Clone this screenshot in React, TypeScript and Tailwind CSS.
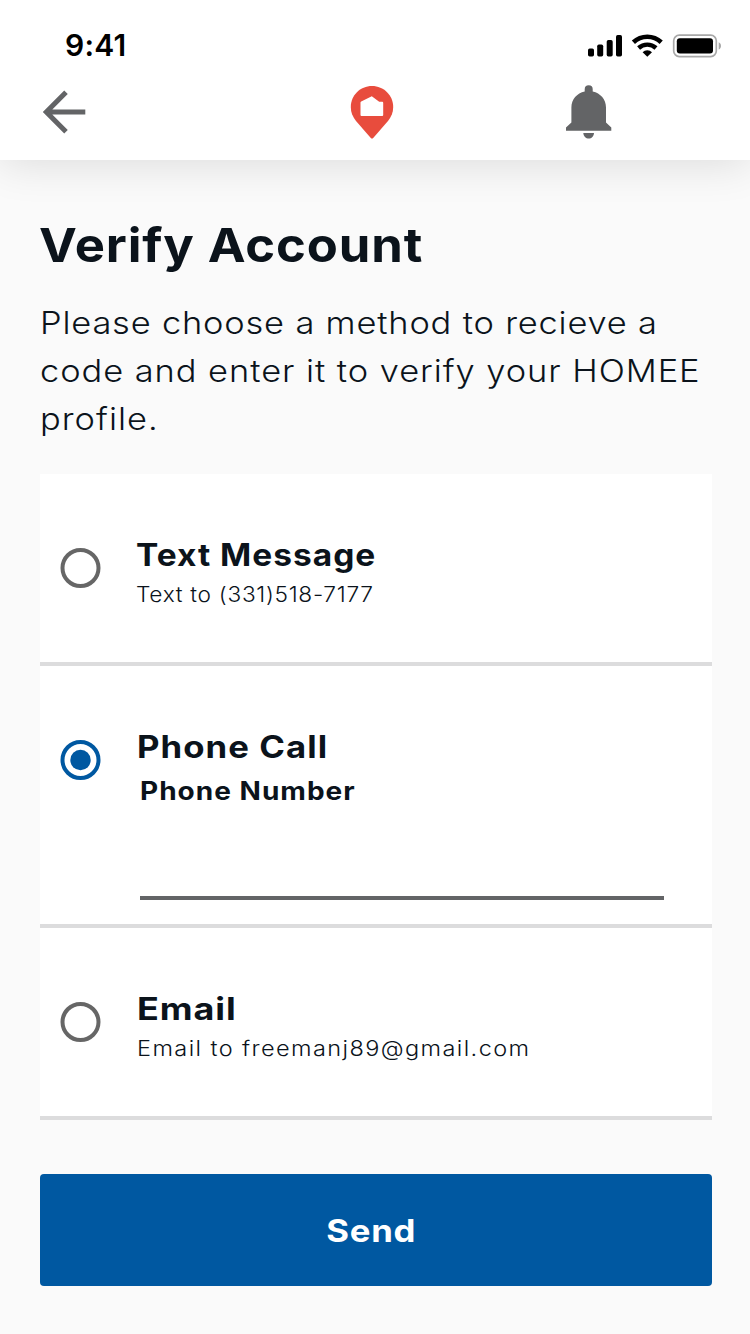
import { useState } from "react";
import type { ReactNode } from "react";

function StatusIcons() {
  return (
    <svg width="136" height="26" viewBox="586 32 136 26" aria-hidden="true">
      <rect x="588" y="48.5" width="6" height="8" rx="1.7" />
      <rect x="597.2" y="44.5" width="6" height="12" rx="1.7" />
      <rect x="606.7" y="40" width="6" height="16.500" rx="1.7" />
      <rect x="616" y="35" width="6" height="21.500" rx="1.7" />
      <g fill="none" stroke="#000">
        <path d="M633.4 42.300A20.300 20.300 0 0 1 661.200 42.300" strokeWidth="4.600" />
        <path d="M638.600 48A13 13 0 0 1 656 48" strokeWidth="4.400" />
      </g>
      <path d="M647.300 56.800L642.600 52.300A6.500 6.500 0 0 1 652 52.300Z" />
      <rect x="673.700" y="35.200" width="42.600" height="21.400" rx="5.600" fill="none" stroke="#a8a8a8" strokeWidth="1.700" />
      <rect x="676.800" y="38.300" width="36.200" height="15.200" rx="3" />
      <path d="M718.700 42.300C720.300 43 721 44.400 721 45.900S720.300 48.800 718.700 49.500Z" fill="#a8a8a8" />
    </svg>
  );
}

function BackIcon() {
  return (
    <svg width="48" height="48" viewBox="40 88 48 48" fill="none" stroke="#636466" strokeWidth="5" aria-hidden="true">
      <path d="M66 92.300L46.300 112L66 131.700M46.300 112H85.300" />
    </svg>
  );
}

function PinIcon() {
  return (
    <svg width="44" height="54" viewBox="350 85 44 54" aria-hidden="true">
      <path
        d="M372 86C383.800 86 393.200 95.400 393.200 107C393.200 112.500 391.300 116.800 388 121L373.200 138C372.500 138.800 371.500 138.800 370.800 138L356 121C352.700 116.800 350.800 112.500 350.800 107C350.800 95.400 360.200 86 372 86Z"
        fill="#e84c3d"
      />
      <path d="M361.200 101.500L371.800 96.300L379.200 101.800H382.300Q383.200 101.800 383.200 102.700V115Q383.200 116 382.200 116H361.500Q360.500 116 360.500 115V102.500Q360.500 101.800 361.200 101.500Z" fill="#fff" />
    </svg>
  );
}

function BellIcon() {
  return (
    <svg width="48" height="56" viewBox="565 84 48 56" fill="#636466" aria-hidden="true">
      <path d="M584.700 91.500V89.200A4 4 0 0 1 592.700 89.200V91.500C600.500 93.300 606 99.300 606 107.500V122.500L611.300 127.500V130.700H566V127.500L571.400 122.500V107.500C571.400 99.300 576.900 93.300 584.700 91.500Z" />
      <path d="M583.300 133H594C593.800 136.500 591.500 138.600 588.700 138.600S583.500 136.500 583.300 133Z" />
    </svg>
  );
}

type OptionProps = {
  title: string;
  titleClass: string;
  selected: boolean;
  onSelect: () => void;
  heightClass: string;
  children: ReactNode;
};

function Option({ title, titleClass, selected, onSelect, heightClass, children }: OptionProps) {
  return (
    <div
      role="radio"
      aria-checked={selected}
      onClick={onSelect}
      className={`flex cursor-pointer items-start border-b-4 border-[#dcdcdd] bg-white pl-5 ${heightClass}`}
    >
      <svg
        width="41"
        height="40"
        viewBox="0 0 41 40"
        className={`mt-[74px] shrink-0 ${selected ? "text-[#0058a1]" : "text-[#666]"}`}
        aria-hidden="true"
      >
        <circle cx="20.500" cy="20" r="18" fill="none" stroke="currentColor" strokeWidth="4" />
        {selected && <circle cx="20.500" cy="20" r="10.200" fill="currentColor" />}
      </svg>
      <div className="ml-[35px] flex grow flex-col items-start pt-[61px]">
        <h2 className={`origin-left text-[31px] leading-10 font-bold ${titleClass}`}>{title}</h2>
        {children}
      </div>
    </div>
  );
}

export default function App() {
  const [method, setMethod] = useState("call");

  return (
    <div className="flex h-[1334px] w-[750px] flex-col overflow-hidden bg-[#fafafa] font-['Inter',sans-serif] text-[#0b131b]">
      <header className="h-40 shrink-0 bg-white shadow-[0_4px_40px_rgba(0,0,0,0.12)]">
        <div className="flex items-center justify-between pt-[25px] pr-7 pl-[65px] text-black">
          <span className="text-[30px] leading-10 font-semibold tracking-[0.2px]">9:41</span>
          <StatusIcons />
        </div>
        <div className="flex items-center pt-[19px] pl-10">
          <button aria-label="Back" className="mr-[262px]">
            <BackIcon />
          </button>
          <PinIcon />
          <button aria-label="Notifications" className="ml-[171px]">
            <BellIcon />
          </button>
        </div>
      </header>

      <main className="flex flex-col pt-[55px] pr-[38px] pl-10">
        <h1 className="-ml-px origin-left scale-x-108 self-start text-[47px] leading-[60px] font-bold tracking-[0.8px]">
          Verify Account
        </h1>
        <p className="mt-6 flex origin-left scale-x-111 flex-col self-start text-[31px] leading-[48px] font-light whitespace-nowrap">
          <span className="tracking-[0.74px]">Please choose a method to recieve a</span>
          <span className="tracking-[0.86px]">code and enter it to verify your HOMEE</span>
          <span className="tracking-[0.93px]">profile.</span>
        </p>

        <div role="radiogroup" className="mt-[31px] flex flex-col">
          <Option
            title="Text Message"
            titleClass="scale-x-108 tracking-[0.93px]"
            selected={method === "text"}
            onSelect={() => setMethod("text")}
            heightClass="h-48"
          >
            <p className="mt-1 origin-left scale-x-108 text-[21px] leading-8 font-light tracking-[0.65px]">
              Text to (331)518-7177
            </p>
          </Option>
          <Option
            title="Phone Call"
            titleClass="ml-px scale-x-112 tracking-[0.95px]"
            selected={method === "call"}
            onSelect={() => setMethod("call")}
            heightClass="h-[262px]"
          >
            <label className="mt-2 ml-1 flex flex-col items-start">
              <span className="origin-left scale-x-112 text-[25px] leading-8 font-bold tracking-[0.9px]">
                Phone Number
              </span>
              <input
                type="tel"
                className="mt-[25px] h-[68px] w-[524px] border-b-4 border-[#636466] bg-transparent text-[25px] outline-none"
              />
            </label>
          </Option>
          <Option
            title="Email"
            titleClass="ml-px scale-x-116 tracking-[0.8px]"
            selected={method === "email"}
            onSelect={() => setMethod("email")}
            heightClass="h-48"
          >
            <p className="mt-1 ml-px origin-left scale-x-112 text-[21px] leading-8 font-light tracking-[1.25px]">
              Email to freemanj89@gmail.com
            </p>
          </Option>
        </div>

        <button className="mt-[54px] flex h-28 items-center justify-center rounded bg-[#0058a1] pt-0.5 pr-2.5 text-white">
          <span className="scale-x-112 text-[31px] leading-10 font-bold tracking-[0.7px]">Send</span>
        </button>
      </main>
    </div>
  );
}
